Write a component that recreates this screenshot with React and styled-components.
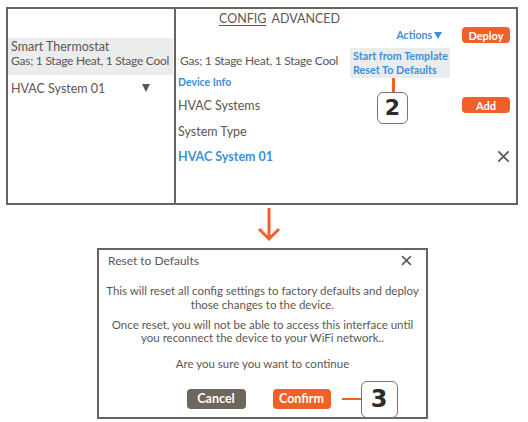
import React from "react";
import styled, { createGlobalStyle } from "styled-components";

const ORANGE = "#f1602b";
const BLUE = "#3f8fd6";
const TEXT = "#5e5653";
const LINE = "#6b635c";

const Global = createGlobalStyle`
  html, body { margin: 0; padding: 0; background: #fff; }
  body { font-family: Lato, "Open Sans", sans-serif; color: ${TEXT}; }
  * { box-sizing: border-box; }
`;

const Page = styled.div`
  width: 528px;
  height: 422px;
  overflow: hidden;
  padding: 7px 0 0 6px;
`;

const TopPanel = styled.div`
  width: 512px;
  height: 198px;
  border: 2px solid ${LINE};
  display: grid;
  grid-template-columns: 168px 1fr;
`;

const LeftCol = styled.div`
  border-right: 2px solid ${LINE};
  padding-top: 29px;
`;

const SelectedItem = styled.div`
  background: #ebedec;
  height: 37px;
  margin-right: 1px;
  padding: 2px 0 0 3px;
  font-size: 12.5px;
  line-height: 14px;
  white-space: nowrap;
`;

const Tight = styled.div`
  font-size: 12px;
  letter-spacing: -0.25px;
`;

const TreeRow = styled.div`
  height: 26px;
  display: flex;
  align-items: center;
  justify-content: space-between;
  padding: 0 24px 0 3px;
  font-size: 12.5px;
`;

const Caret = styled.span`
  width: 0;
  height: 0;
  border-left: 4.5px solid transparent;
  border-right: 4.5px solid transparent;
  border-top: 8px solid #5e5653;
`;

const RightCol = styled.div`
  display: flex;
  flex-direction: column;
  padding: 0 6px 0 2px;
`;

const Tabs = styled.div`
  height: 18px;
  padding: 3px 0 0 41px;
  display: flex;
  gap: 5px;
  font-size: 12.5px;
  line-height: 14px;
`;

const Tab = styled.span`
  text-decoration: ${(p) => (p.$active ? "underline" : "none")};
  text-underline-offset: 2px;
`;

const Row = styled.div`
  height: ${(p) => p.$h || 16}px;
  margin-top: ${(p) => p.$mt || 0}px;
  display: flex;
  align-items: center;
  justify-content: ${(p) => (p.$end ? "flex-end" : "space-between")};
  padding-left: ${(p) => p.$pl || 0}px;
  font-size: 12.5px;
`;

const BlueLabel = styled.span`
  color: ${BLUE};
  font-weight: 700;
  font-size: ${(p) => p.$size || 10}px;
`;

const ActionsWrap = styled.div`
  position: relative;
  margin-right: 20px;
  display: flex;
  align-items: center;
  gap: 2px;
  color: ${BLUE};
  font-weight: 700;
  font-size: 10.5px;
`;

const DownTri = styled.span`
  width: 0;
  height: 0;
  border-left: 4px solid transparent;
  border-right: 4px solid transparent;
  border-top: 7px solid ${BLUE};
`;

const Menu = styled.div`
  position: absolute;
  top: 19px;
  right: -8px;
  width: 100px;
  height: 30px;
  background: #eaeded;
  padding: 1px 0 0 3px;
  display: flex;
  flex-direction: column;
  color: ${BLUE};
  font-weight: 700;
  font-size: 10.8px;
  line-height: 14px;
  white-space: nowrap;
`;

const Connector = styled.div`
  position: absolute;
  background: ${ORANGE};
  ${(p) =>
    p.$vertical
      ? `left: ${p.$x}px; top: ${p.$y}px; width: 3px; height: ${p.$len}px;`
      : `left: ${p.$x}px; top: ${p.$y}px; height: 2.5px; width: ${p.$len}px;`}
`;

const Badge = styled.div`
  position: absolute;
  left: ${(p) => p.$x}px;
  top: ${(p) => p.$y}px;
  width: ${(p) => p.$w}px;
  height: ${(p) => p.$hh}px;
  border: 1.5px solid #7a726c;
  border-radius: 6px;
  background: #fff;
  display: flex;
  align-items: center;
  justify-content: center;
  font-family: "DejaVu Sans", sans-serif;
  font-weight: 700;
  font-size: ${(p) => p.$fs || 22}px;
  color: #2e2a28;
`;

const OrangeButton = styled.button`
  display: block;
  border: none;
  border-radius: 4px;
  background: ${ORANGE};
  color: #fff;
  font-family: Lato, sans-serif;
  font-weight: 700;
  font-size: ${(p) => p.$fs || 11}px;
  width: ${(p) => p.$w || 48}px;
  height: ${(p) => p.$h || 16}px;
  padding: 0;
`;

const GrayButton = styled(OrangeButton)`
  background: #6f665d;
`;

const ArrowArea = styled.div`
  height: 43px;
  display: flex;
  justify-content: flex-start;
  padding: 3px 0 0 251px;
`;

const Modal = styled.div`
  width: 331px;
  height: 171px;
  margin-left: 91px;
  border: 2px solid ${LINE};
  display: flex;
  flex-direction: column;
`;

const ModalHead = styled.div`
  height: 21px;
  display: flex;
  align-items: center;
  justify-content: space-between;
  padding: 0 14px 0 9px;
  font-size: 12px;
`;

const ModalBody = styled.div`
  margin-top: 13px;
  text-align: center;
  font-size: 11.5px;
  line-height: 13.5px;
  white-space: nowrap;
`;

const Para = styled.p`
  margin: 0 0 ${(p) => p.$mb || 0}px;
`;

const ButtonRow = styled.div`
  margin-top: 18px;
  display: flex;
  justify-content: center;
  align-items: flex-start;
  gap: 27px;
  padding-right: 8px;
`;

const Anchor = styled.div`
  position: relative;
  display: flex;
`;

const CloseX = ({ size = 11, stroke = 1.6 }) => (
  <svg width={size} height={size} viewBox="0 0 10 10">
    <path d="M1 1 L9 9 M9 1 L1 9" stroke={TEXT} strokeWidth={stroke} fill="none" />
  </svg>
);

export default function App() {
  return (
    <>
      <Global />
      <Page>
        <TopPanel>
          <LeftCol>
            <SelectedItem>
              <div>Smart Thermostat</div>
              <Tight>Gas; 1 Stage Heat, 1 Stage Cool</Tight>
            </SelectedItem>
            <TreeRow>
              <span>HVAC System 01</span>
              <Caret />
            </TreeRow>
          </LeftCol>
          <RightCol>
            <Tabs>
              <Tab $active>CONFIG</Tab>
              <Tab>ADVANCED</Tab>
            </Tabs>
            <Row $end>
              <ActionsWrap>
                Actions
                <DownTri />
                <Menu>
                  <span>Start from Template</span>
                  <span>Reset To Defaults</span>
                  <Connector $vertical $x={42} $y={30} $len={15} />
                  <Badge $x={27} $y={44} $w={31} $hh={32}>2</Badge>
                </Menu>
              </ActionsWrap>
              <OrangeButton>Deploy</OrangeButton>
            </Row>
            <Row $mt={7} $h={20} $pl={2}>
              <Tight>Gas; 1 Stage Heat, 1 Stage Cool</Tight>
            </Row>
            <Row $mt={4}>
              <BlueLabel $size={10.5}>Device Info</BlueLabel>
            </Row>
            <Row $mt={7}>
              <span>HVAC Systems</span>
              <OrangeButton>Add</OrangeButton>
            </Row>
            <Row $mt={10}>
              <span>System Type</span>
            </Row>
            <Row $mt={9}>
              <BlueLabel $size={12.5}>HVAC System 01</BlueLabel>
              <CloseX size={13} stroke={1.3} />
            </Row>
          </RightCol>
        </TopPanel>
        <ArrowArea>
          <svg width="24" height="34" viewBox="0 0 24 34">
            <path d="M12 0 V31 M2 21 L12 31 L22 21" stroke={ORANGE} strokeWidth="3" fill="none" />
          </svg>
        </ArrowArea>
        <Modal>
          <ModalHead>
            <span>Reset to Defaults</span>
            <CloseX size={11} stroke={1.4} />
          </ModalHead>
          <ModalBody>
            <Para $mb={6.5}>
              This will reset all config settings to factory defaults and deploy
              <br />
              those changes to the device.
            </Para>
            <Para $mb={12.5}>
              Once reset, you will not be able to access this interface until
              <br />
              you reconnect the device to your WiFi network..
            </Para>
            <Para>Are you sure you want to continue</Para>
          </ModalBody>
          <ButtonRow>
            <GrayButton $w={59} $h={20} $fs={12.5}>Cancel</GrayButton>
            <Anchor>
              <OrangeButton $w={58} $h={20} $fs={12.5}>Confirm</OrangeButton>
              <Connector $x={69} $y={9} $len={20} />
              <Badge $x={88} $y={-8} $w={37} $hh={37} $fs={24}>3</Badge>
            </Anchor>
          </ButtonRow>
        </Modal>
      </Page>
    </>
  );
}
